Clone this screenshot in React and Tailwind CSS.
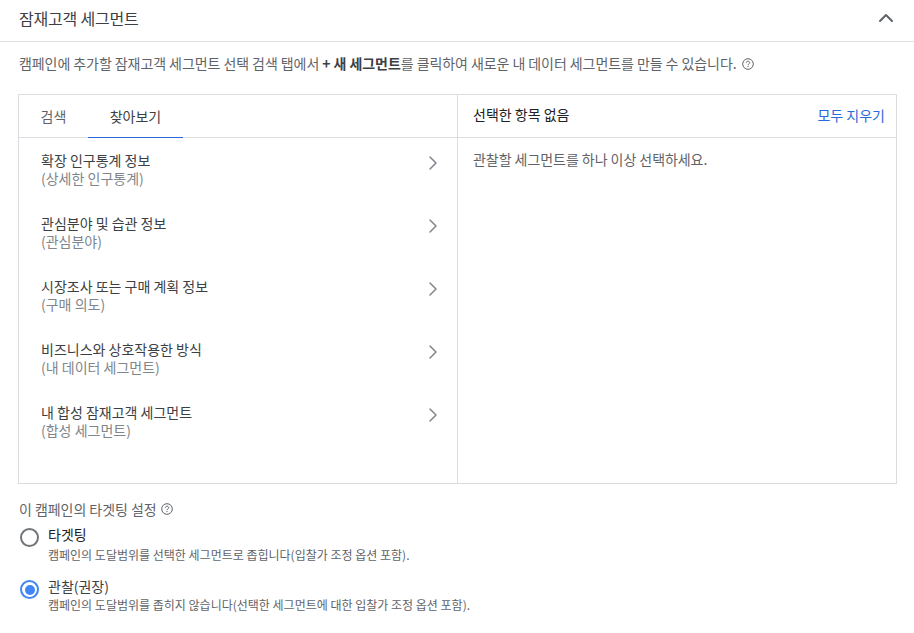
import { ChevronRight, ChevronUp } from 'lucide-react'

const font = { fontFamily: '"Noto Sans CJK KR", "Noto Sans", sans-serif' }

const categories = [
  { title: '확장 인구통계 정보', sub: '(상세한 인구통계)' },
  { title: '관심분야 및 습관 정보', sub: '(관심분야)' },
  { title: '시장조사 또는 구매 계획 정보', sub: '(구매 의도)' },
  { title: '비즈니스와 상호작용한 방식', sub: '(내 데이터 세그먼트)' },
  { title: '내 합성 잠재고객 세그먼트', sub: '(합성 세그먼트)' },
]

function HelpIcon({ className }) {
  return (
    <svg viewBox="0 0 12 12" width="12" height="12" className={className} aria-hidden="true">
      <circle cx="6" cy="6" r="5.3" fill="none" stroke="#5f6368" strokeWidth="1" />
      <path d="M4.3 4.8c0-1 .8-1.6 1.7-1.6s1.7.6 1.7 1.5c0 1.2-1.7 1.2-1.7 2.5" fill="none" stroke="#5f6368" strokeWidth="1" />
      <rect x="5.5" y="8" width="1" height="1" fill="#5f6368" />
    </svg>
  )
}

function Radio({ checked }) {
  return (
    <span className={`mt-[1px] flex h-[19px] w-[19px] shrink-0 items-center justify-center rounded-full border-2 ${checked ? 'border-[#4285f4]' : 'border-[#70757a]'}`}>
      {checked && <span className="h-[10px] w-[10px] rounded-full bg-[#4285f4]" />}
    </span>
  )
}

export default function App() {
  return (
    <div className="h-[633px] w-[914px] overflow-hidden bg-white text-[#3c4043]" style={font}>
      <div className="flex h-[42px] items-center justify-between border-b border-[#e0e0e0] pl-[19px] pr-[16px]">
        <h2 className="-mt-[6px] text-[16px] font-normal tracking-[-0.2px] text-[#3c4043]">잠재고객 세그먼트</h2>
        <ChevronUp size={24} strokeWidth={2} className="-mt-[5px] text-[#5f6368]" />
      </div>

      <p className="flex h-[52px] items-center gap-[5px] pb-[9px] pl-[19px] text-[14px] tracking-[-0.07px] text-[#5f6368]">
        <span>
          캠페인에 추가할 잠재고객 세그먼트 선택 검색 탭에서 <b className="font-bold text-[#3c4043]">+ 새 세그먼트</b>를 클릭하여 새로운 내 데이터 세그먼트를 만들 수 있습니다.
        </span>
        <HelpIcon />
      </p>

      <div className="ml-[18px] grid h-[390px] w-[879px] grid-cols-[439px_1fr] border border-[#dadce0]">
        <div className="flex flex-col border-r border-[#dadce0]">
          <div className="flex h-[43px] border-b border-[#dadce0] text-[14px]">
            <div className="flex w-[69px] items-center justify-center text-[#5f6368]">검색</div>
            <div className="-mb-px flex w-[95px] items-center justify-center border-b border-[#2a6ad8] text-[#3c4043]">찾아보기</div>
          </div>
          <ul className="pt-[13px]">
            {categories.map((cat) => (
              <li key={cat.title} className="flex h-[63px] items-start justify-between pl-[22px] pr-[12px]">
                <div className="text-[14px] leading-[18px]">
                  <div className="text-[#3c4043]">{cat.title}</div>
                  <div className="text-[#80868b]">{cat.sub}</div>
                </div>
                <ChevronRight size={24} strokeWidth={1.5} className="text-[#80868b]" />
              </li>
            ))}
          </ul>
        </div>
        <div className="flex flex-col">
          <div className="flex h-[43px] items-center justify-between border-b border-[#dadce0] pl-[15px] pr-[11px] text-[14px]">
            <span className="-mt-[3px] text-[#202124]">선택한 항목 없음</span>
            <span className="-mt-[2px] text-[#2a6ad8]">모두 지우기</span>
          </div>
          <p className="pl-[15px] pt-[12px] text-[14px] leading-[18px] tracking-[-0.05px] text-[#5f6368]">관찰할 세그먼트를 하나 이상 선택하세요.</p>
        </div>
      </div>

      <div className="flex items-center gap-[4px] pl-[19px] pt-[16px] text-[14px] leading-[18px] tracking-[-0.05px] text-[#5f6368]">
        <span>이 캠페인의 타겟팅 설정</span>
        <HelpIcon />
      </div>
      <div className="mt-[9px] flex items-start gap-[9px] pl-[20px]">
        <Radio />
        <div>
          <div className="text-[14px] leading-[15px] text-[#202124]">타겟팅</div>
          <div className="mt-[6px] text-[12px] leading-[14px] text-[#5f6368]">캠페인의 도달범위를 선택한 세그먼트로 좁힙니다(입찰가 조정 옵션 포함).</div>
        </div>
      </div>
      <div className="mt-[17px] flex items-start gap-[9px] pl-[20px]">
        <Radio checked />
        <div>
          <div className="text-[14px] leading-[15px] text-[#3c4043]">관찰(권장)</div>
          <div className="mt-[4px] text-[12px] leading-[14px] text-[#5f6368]">캠페인의 도달범위를 좁히지 않습니다(선택한 세그먼트에 대한 입찰가 조정 옵션 포함).</div>
        </div>
      </div>
    </div>
  )
}
